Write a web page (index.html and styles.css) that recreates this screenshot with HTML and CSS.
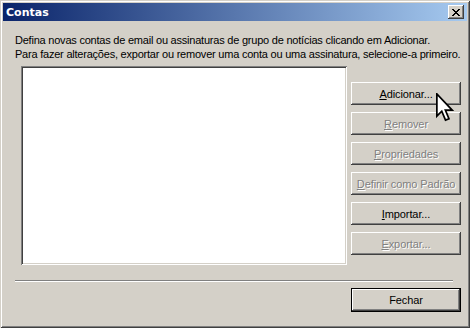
FILE: index.html
```html
<!DOCTYPE html>
<html>
<head>
<meta charset="utf-8">
<link rel="stylesheet" href="styles.css">
</head>
<body>
<div class="window">
  <div class="titlebar">
    <span class="title">Contas</span>
    <button class="close"><svg width="8" height="7" viewBox="0 0 8 7"><path d="M0 0h2v1h1v1h2v-1h1v-1h2v1h-1v1h-1v1h-1v1h1v1h1v1h1v1h-2v-1h-1v-1h-2v1h-1v1h-2v-1h1v-1h1v-1h1v-1h-1v-1h-1v-1h-1z" fill="#000"/></svg></button>
  </div>
  <div class="content">
    <p class="intro">Defina novas contas de email ou assinaturas de grupo de notícias clicando em Adicionar.<br>Para fazer alterações, exportar ou remover uma conta ou uma assinatura, selecione-a primeiro.</p>
    <div class="main">
      <div class="listbox"></div>
      <div class="buttons">
        <button class="btn"><u>A</u>dicionar...</button>
        <button class="btn disabled"><u>R</u>emover</button>
        <button class="btn disabled"><u>P</u>ropriedades</button>
        <button class="btn disabled"><u>D</u>efinir como Padrão</button>
        <button class="btn"><u>I</u>mportar...</button>
        <button class="btn disabled"><u>E</u>xportar...</button>
      </div>
    </div>
    <div class="separator"></div>
    <div class="footer">
      <button class="btn default">Fechar</button>
    </div>
  </div>
  <svg class="cursor" width="18" height="29" viewBox="0 0 12.5 20">
    <path d="M0.6 0.6 V16 L4 12.6 L6.6 18.8 L9 17.8 L6.5 11.8 H11.2 Z" fill="#fff" stroke="#000" stroke-width="1.2" stroke-linejoin="miter"/>
  </svg>
</div>
</body>
</html>
```

FILE: styles.css
```css
html, body {
  margin: 0;
  padding: 0;
  background: #d4d0c8;
}
.window {
  position: relative;
  width: 470px;
  height: 328px;
  box-sizing: border-box;
  padding: 3px;
  background: #d4d0c8;
  box-shadow: inset 1px 1px #d4d0c8, inset -1px -1px #404040, inset 2px 2px #ffffff, inset -2px -2px #808080;
  font-family: "Liberation Sans", Arial, sans-serif;
  font-size: 11px;
  color: #000;
}
.titlebar {
  height: 18px;
  display: flex;
  align-items: center;
  justify-content: space-between;
  padding: 0 3px 0 3px;
  background: linear-gradient(to right, #0a246a, #a6caf0);
}
.title {
  color: #fff;
  font-weight: bold;
  font-size: 11px;
  font-family: "DejaVu Sans", sans-serif;
}
.close {
  width: 16px;
  height: 14px;
  padding: 0;
  margin: 0;
  border: none;
  background: #d4d0c8;
  box-shadow: inset -1px -1px #404040, inset 1px 1px #ffffff, inset -2px -2px #808080;
  display: flex;
  align-items: center;
  justify-content: center;
}
.close svg { display: block; }
.content {
  padding: 12px 6px 0 12px;
}
.intro {
  margin: 0;
  line-height: 14px;
  white-space: nowrap;
  letter-spacing: -0.22px;
}
.main {
  display: flex;
  margin-top: 5px;
  padding-left: 6px;
  gap: 4px;
}
.listbox {
  width: 327px;
  height: 199px;
  box-sizing: border-box;
  background: #fff;
  box-shadow: inset 1px 1px #808080, inset -1px -1px #ffffff, inset 2px 2px #404040, inset -2px -2px #d4d0c8;
}
.buttons {
  display: flex;
  flex-direction: column;
  gap: 7px;
  padding-top: 16px;
}
.btn {
  width: 110px;
  height: 23px;
  box-sizing: border-box;
  padding: 0;
  border: none;
  background: #d4d0c8;
  font-family: "Liberation Sans", Arial, sans-serif;
  font-size: 11px;
  letter-spacing: -0.1px;
  color: #000;
  box-shadow: inset -1px -1px #404040, inset 1px 1px #ffffff, inset -2px -2px #808080;
}
.btn.disabled {
  color: #808080;
  text-shadow: 1px 1px #ffffff;
}
.separator {
  margin: 15px 8px 0 0;
  height: 2px;
  box-sizing: border-box;
  border-top: 1px solid #808080;
  border-bottom: 1px solid #ffffff;
}
.footer {
  display: flex;
  justify-content: flex-end;
  padding: 6px 0 0 0;
}
.btn.default {
  width: 110px;
  height: 24px;
  box-shadow: inset 0 0 0 1px #000000, inset -2px -2px #404040, inset 2px 2px #ffffff, inset -3px -3px #808080;
}
.cursor {
  position: absolute;
  left: 436px;
  top: 93px;
}
```
